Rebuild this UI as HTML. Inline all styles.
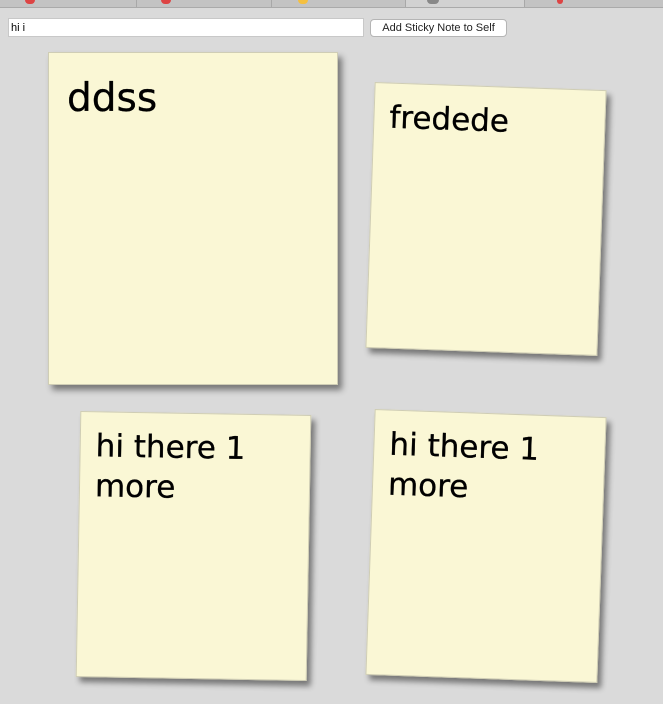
<!DOCTYPE html>
<html><head><meta charset="utf-8"><style>
html,body{margin:0;padding:0;}
body{width:663px;height:704px;background:#dadada;position:relative;overflow:hidden;font-family:"DejaVu Sans","Liberation Sans",sans-serif;}
.tabs{position:absolute;left:0;top:0;width:663px;height:7px;background:#c3c3c3;border-bottom:1px solid #aaa;}
.tabs span{position:absolute;top:0;height:7px;border-left:1px solid #a8a8a8;}
.tabs .act{background:#d2d2d2;}
input{position:absolute;left:8px;top:18px;width:350px;height:17px;border:1px solid #c8c8c8;padding:0 2px;font:11px "Liberation Sans",sans-serif;background:#fff;margin:0;box-sizing:content-box;}
button{position:absolute;left:370px;top:19px;width:137px;height:18px;border:1px solid #b5b5b5;border-radius:4px;background:#fff;font:11px "Liberation Sans",sans-serif;color:#222;padding:0;margin:0;}
.note{position:absolute;background:#faf7d5;border:1px solid #cfcdb5;box-shadow:4px 5px 6px rgba(0,0,0,.45);box-sizing:border-box;color:#000;}
.note div{padding:16px 0 0 20px;font-size:31px;line-height:40px;-webkit-text-stroke:0.3px #000;}
</style></head><body>
<div class="tabs"><span style="left:136px"></span><span style="left:271px"></span><span class="act" style="left:405px;width:118px"></span><span style="left:524px"></span>
<i style="position:absolute;left:25px;top:0;width:10px;height:4px;background:#d44;border-radius:0 0 5px 5px"></i>
<i style="position:absolute;left:161px;top:0;width:10px;height:4px;background:#d44;border-radius:0 0 5px 5px"></i>
<i style="position:absolute;left:298px;top:0;width:10px;height:4px;background:#f5c040;border-radius:0 0 5px 5px"></i>
<i style="position:absolute;left:427px;top:0;width:12px;height:4px;background:#888;border-radius:0 0 5px 5px"></i>
<i style="position:absolute;left:557px;top:0;width:6px;height:4px;background:#d44;border-radius:0 0 3px 3px"></i>
</div>
<input value="hi i">
<button>Add Sticky Note to Self</button>
<div class="note" style="left:48px;top:52px;width:290px;height:333px;"><div style="font-size:39px;padding-top:26px;padding-left:18px;">ddss</div></div>
<div class="note" style="left:370px;top:86px;width:232px;height:266px;transform:rotate(2deg);"><div style="padding-top:14px;padding-left:15px;">fredede</div></div>
<div class="note" style="left:78px;top:413px;width:231px;height:266px;transform:rotate(1deg);"><div style="padding-top:14px;padding-left:15px;">hi there 1<br>more</div></div>
<div class="note" style="left:370px;top:413px;width:232px;height:266px;transform:rotate(2deg);"><div style="padding-top:14px;padding-left:15px;">hi there 1<br>more</div></div>
</body></html>
